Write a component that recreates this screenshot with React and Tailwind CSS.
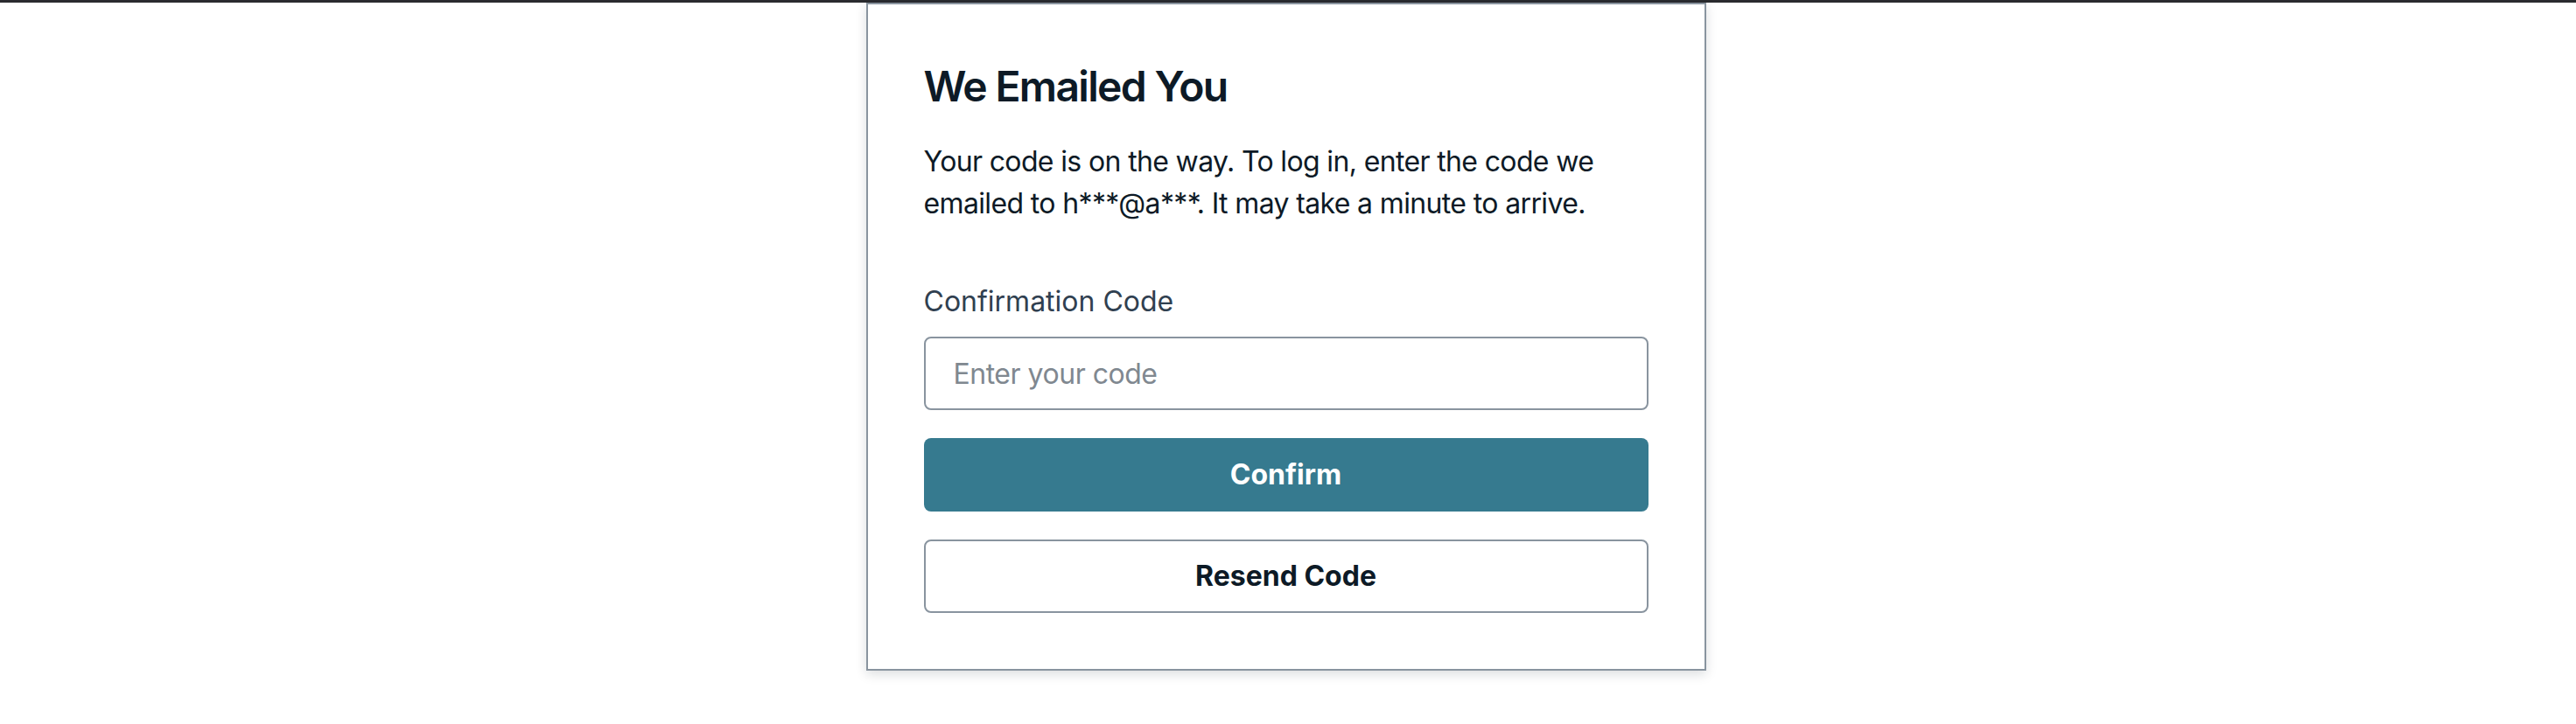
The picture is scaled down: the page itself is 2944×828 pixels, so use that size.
export default function App() {
  return (
    <div className="min-h-[828px] bg-white font-['Inter',sans-serif] text-[#0d1a26]">
      {/* Top strip */}
      <div className="h-[3px] bg-[#2a2b2f]" />

      <div className="flex justify-center pr-[5px]">
        <div className="w-[960px] border-2 border-[#89949f] bg-white p-16 shadow-[0_4px_12px_rgba(13,26,38,0.15)]">
          <div className="flex flex-col">
            <h3 className="text-[48px] font-semibold leading-[60px] tracking-[-0.035em]">We Emailed You</h3>

            <p className="mt-8 text-[32px] leading-[48px] tracking-[-0.02em]">
              Your code is on the way. To log in, enter the code we emailed to h***@a***. It may take a
              minute to arrive.
            </p>

            {/* Field */}
            <div className="mt-16 flex flex-col gap-4">
              <label className="text-[32px] leading-[48px] text-[#304050]">Confirmation Code</label>
              <input
                type="text"
                placeholder="Enter your code"
                className="h-[84px] rounded-lg border-2 border-[#89949f] px-8 text-[32px] tracking-[-0.015em] text-[#0d1a26] outline-none placeholder:text-[#808890]"
              />
            </div>

            <button className="mt-8 h-[84px] rounded-lg bg-[#367a8f] text-[32px] font-bold text-white">
              Confirm
            </button>

            <button className="mt-8 h-[84px] rounded-lg border-2 border-[#89949f] bg-white text-[32px] font-bold text-[#0d1a26]">
              Resend Code
            </button>
          </div>
        </div>
      </div>
    </div>
  );
}
